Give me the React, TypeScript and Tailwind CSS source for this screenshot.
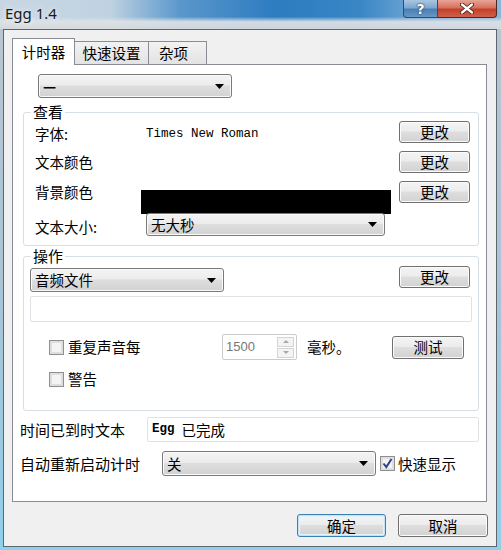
import type { ReactNode } from 'react';

const btnBg =
  'bg-[linear-gradient(to_bottom,#f4f4f4_0%,#ececec_45%,#dedede_50%,#d2d2d2_100%)]';

function Arrow() {
  return (
    <svg width="9" height="5" viewBox="0 0 9 5" className="shrink-0">
      <path d="M0 0h9L4.5 5z" fill="#000" />
    </svg>
  );
}

function Combo({ children, className }: { children: ReactNode; className: string }) {
  return (
    <div
      className={`flex shrink-0 items-center rounded-[3px] border border-[#7a7a7a] ${btnBg} pl-[4px] pr-[7px] shadow-[inset_0_0_0_1px_#fafafa] ${className}`}
    >
      <span className="flex-1 whitespace-nowrap text-[14.5px] leading-[20px]">{children}</span>
      <Arrow />
    </div>
  );
}

function Btn({ label, className = '' }: { label: string; className?: string }) {
  return (
    <button
      className={`flex shrink-0 items-center justify-center rounded-[3px] border border-[#707070] ${btnBg} text-[14.5px] leading-[18px] shadow-[inset_0_0_0_1px_#fbfbfb] ${className}`}
    >
      {label}
    </button>
  );
}

function Check({ checked = false }: { checked?: boolean }) {
  return (
    <span className="flex h-[15px] w-[15px] shrink-0 items-center justify-center border border-[#8e8f8f] bg-[#f4f4f4] shadow-[inset_0_0_0_2px_#dedede]">
      {checked && (
        <svg width="11" height="11" viewBox="0 0 11 11">
          <path d="M1.5 5.5l2.8 3.5L9.5 1" fill="none" stroke="#2b3f8e" strokeWidth="2" />
        </svg>
      )}
    </span>
  );
}

export default function App() {
  return (
    <div className="flex h-[550px] w-[501px] flex-col overflow-hidden bg-[linear-gradient(to_bottom,#b9c6d1_0%,#a9c4d6_55%,#8fd0ea_100%)] font-['Noto_Sans_CJK_SC','Noto_Sans',sans-serif] text-black">
      {/* title bar */}
      <div className="flex h-[29px] shrink-0 bg-[linear-gradient(to_bottom,rgba(230,234,238,0)_0%,rgba(230,234,238,0)_58%,rgba(222,226,230,0.92)_75%,rgba(214,218,222,0.95)_100%),linear-gradient(to_right,#c9d7e3_0%,#bfd2e1_22%,#5a97cc_36%,#2c7cc0_55%,#3a86c5_72%,#6aa4d4_82%,#8ab6da_100%)]">
        <div className="pl-[5px] pt-[4px] font-['Noto_Sans',sans-serif] text-[15px] leading-[18px] text-[#1a1a1a] [text-shadow:0_0_6px_#fff]">
          Egg 1.4
        </div>
        <div className="ml-auto mr-[4px] flex h-[18px]">
          <div className="flex w-[35px] items-center justify-center rounded-bl-[4px] border border-t-0 border-[#3b4a5a] bg-[linear-gradient(to_bottom,#a9c7e0_0%,#7ea8cf_45%,#4a80b5_55%,#6797c5_100%)] font-['DejaVu_Sans',sans-serif] text-[14px] font-bold leading-none text-white [text-shadow:0_0_2px_#1d2f44,0_0_1px_#1d2f44]">
            ?
          </div>
          <div className="flex w-[59px] items-center justify-center rounded-br-[4px] border border-l-0 border-t-0 border-[#4a2a24] bg-[linear-gradient(to_bottom,#e6a597_0%,#d8705c_45%,#c2412a_55%,#d0614a_100%)]">
            <svg width="14" height="11" viewBox="0 0 14 11">
              <path d="M2 1.5l10 8M12 1.5l-10 8" stroke="#3a1a14" strokeWidth="4" strokeLinecap="round" />
              <path d="M2 1.5l10 8M12 1.5l-10 8" stroke="#fff" strokeWidth="2.4" strokeLinecap="round" />
            </svg>
          </div>
        </div>
      </div>

      {/* body */}
      <div className="mb-[3px] ml-[3px] mr-[4px] flex flex-1 flex-col border border-[#5b6670] bg-[#f0f0f0] pl-[8px] pr-[9px] pt-[8px]">
        {/* tabs */}
        <div className="flex h-[26px] items-end text-[14.5px]">
          <div className="relative z-10 -mb-px flex h-[27px] w-[63px] items-center justify-center border border-b-0 border-[#898c95] bg-white leading-[18px]">
            计时器
          </div>
          <div className="flex h-[23px] w-[74px] items-center justify-center border border-b-0 border-l-0 border-[#898c95] bg-[linear-gradient(to_bottom,#f2f2f2,#e3e3e3)] leading-[18px]">
            快速设置
          </div>
          <div className="flex h-[23px] w-[58px] items-center justify-center border border-b-0 border-l-0 border-[#898c95] bg-[linear-gradient(to_bottom,#f2f2f2,#e3e3e3)] pr-[8px] leading-[18px]">
            杂项
          </div>
        </div>

        {/* tab pane */}
        <div className="flex h-[438px] w-[475px] flex-col border border-[#898c95] bg-white pl-[10px] text-[14.5px]">
          <Combo className="ml-[15px] mt-[9px] h-[24px] w-[194px]">
            <span className="font-bold">—</span>
          </Combo>

          {/* 查看 */}
          <fieldset className="mt-[5px] w-[456px] rounded-[3px] border border-[#d5dfe5] pb-[9px] pl-[11px] pr-[8px]">
            <legend className="ml-[-4px] px-[2px] text-[15px] leading-[18px]">查看</legend>
            <div className="flex h-[22px] items-center">
              <span className="w-[106px] pt-[4px] leading-[18px]">字体:</span>
              <span className="pl-[5px] pt-[3px] font-['Liberation_Mono',monospace] text-[12.5px] leading-[16px]">
                Times New Roman
              </span>
              <Btn label="更改" className="ml-auto h-[22px] w-[71px]" />
            </div>
            <div className="mt-[8px] flex h-[22px] items-center">
              <span className="w-[106px] leading-[18px]">文本颜色</span>
              <Btn label="更改" className="ml-auto h-[22px] w-[71px]" />
            </div>
            <div className="mt-[8px] flex items-start">
              <span className="flex h-[22px] w-[106px] items-center leading-[18px]">背景颜色</span>
              <div className="mt-[9px] h-[24px] w-[250px] bg-black" />
              <Btn label="更改" className="ml-auto h-[22px] w-[71px]" />
            </div>
            <div className="mt-[-1px] flex h-[23px] items-center">
              <span className="w-[106px] pt-[5px] leading-[18px]">文本大小:</span>
              <Combo className="relative ml-[5px] h-[23px] w-[239px]">无大秒</Combo>
            </div>
          </fieldset>

          {/* 操作 */}
          <fieldset className="mt-[1px] w-[456px] rounded-[3px] border border-[#d5dfe5] pb-[18px] pl-[6px] pr-[6px]">
            <legend className="ml-[1px] px-[2px] text-[15px] leading-[18px]">操作</legend>
            <div className="flex h-[27px] items-start">
              <Combo className="mt-[3px] h-[24px] w-[194px]">音频文件</Combo>
              <Btn label="更改" className="ml-auto mr-[2px] mt-[1px] h-[22px] w-[71px]" />
            </div>
            <div className="mt-[4px] h-[26px] rounded-[2px] border border-[#dfe3e8] bg-white" />
            <div className="mt-[12px] flex h-[26px] items-center">
              <div className="flex w-[192px] items-center pl-[19px]">
                <Check />
                <span className="ml-[4px] leading-[18px]">重复声音每</span>
              </div>
              <div className="flex h-[26px] w-[75px] items-center rounded-[2px] border border-[#c9cbcf] pr-[2px]">
                <span className="flex-1 pl-[3px] font-['Liberation_Sans',sans-serif] text-[13px] text-[#777]">1500</span>
                <div className="flex flex-col gap-[1px]">
                  <div className="flex h-[10px] w-[17px] items-center justify-center border border-[#d4d4d4] bg-[#f4f4f4]">
                    <svg width="6" height="3" viewBox="0 0 6 3">
                      <path d="M0 3h6L3 0z" fill="#a8a8a8" />
                    </svg>
                  </div>
                  <div className="flex h-[10px] w-[17px] items-center justify-center border border-[#d4d4d4] bg-[#f4f4f4]">
                    <svg width="6" height="3" viewBox="0 0 6 3">
                      <path d="M0 0h6L3 3z" fill="#a8a8a8" />
                    </svg>
                  </div>
                </div>
              </div>
              <span className="ml-[10px] leading-[18px]">毫秒。</span>
              <Btn label="测试" className="ml-auto mr-[8px] h-[23px] w-[72px]" />
            </div>
            <div className="mt-[6px] flex h-[26px] items-center pl-[19px]">
              <Check />
              <span className="ml-[4px] leading-[18px]">警告</span>
            </div>
          </fieldset>

          <div className="ml-[-3px] mt-[6px] flex h-[25px] items-center">
            <span className="w-[127px] text-[15px] leading-[18px]">时间已到时文本</span>
            <div className="flex h-[25px] w-[332px] items-center rounded-[2px] border border-[#dfe3e8] pl-[4px]">
              <span className="font-['Liberation_Mono',monospace] text-[12.5px] font-bold">Egg</span>
              <span className="ml-[7px] leading-[18px]">已完成</span>
            </div>
          </div>

          <div className="ml-[-3px] mt-[9px] flex h-[25px] items-center">
            <span className="w-[142px] text-[15px] leading-[18px]">自动重新启动计时</span>
            <Combo className="h-[25px] w-[214px]">关</Combo>
            <span className="ml-[4px]">
              <Check checked />
            </span>
            <span className="ml-[3px] leading-[18px]">快速显示</span>
          </div>
        </div>

        {/* dialog buttons */}
        <div className="mr-[-1px] mt-[12px] flex justify-end gap-[12px]">
          <Btn
            label="确定"
            className="h-[23px] w-[89px] !border-[#3c7fb1] !shadow-[inset_0_0_0_1px_#bfe3f7,inset_0_0_0_2px_#e3f3fc]"
          />
          <Btn label="取消" className="h-[23px] w-[90px]" />
        </div>
      </div>
    </div>
  );
}
